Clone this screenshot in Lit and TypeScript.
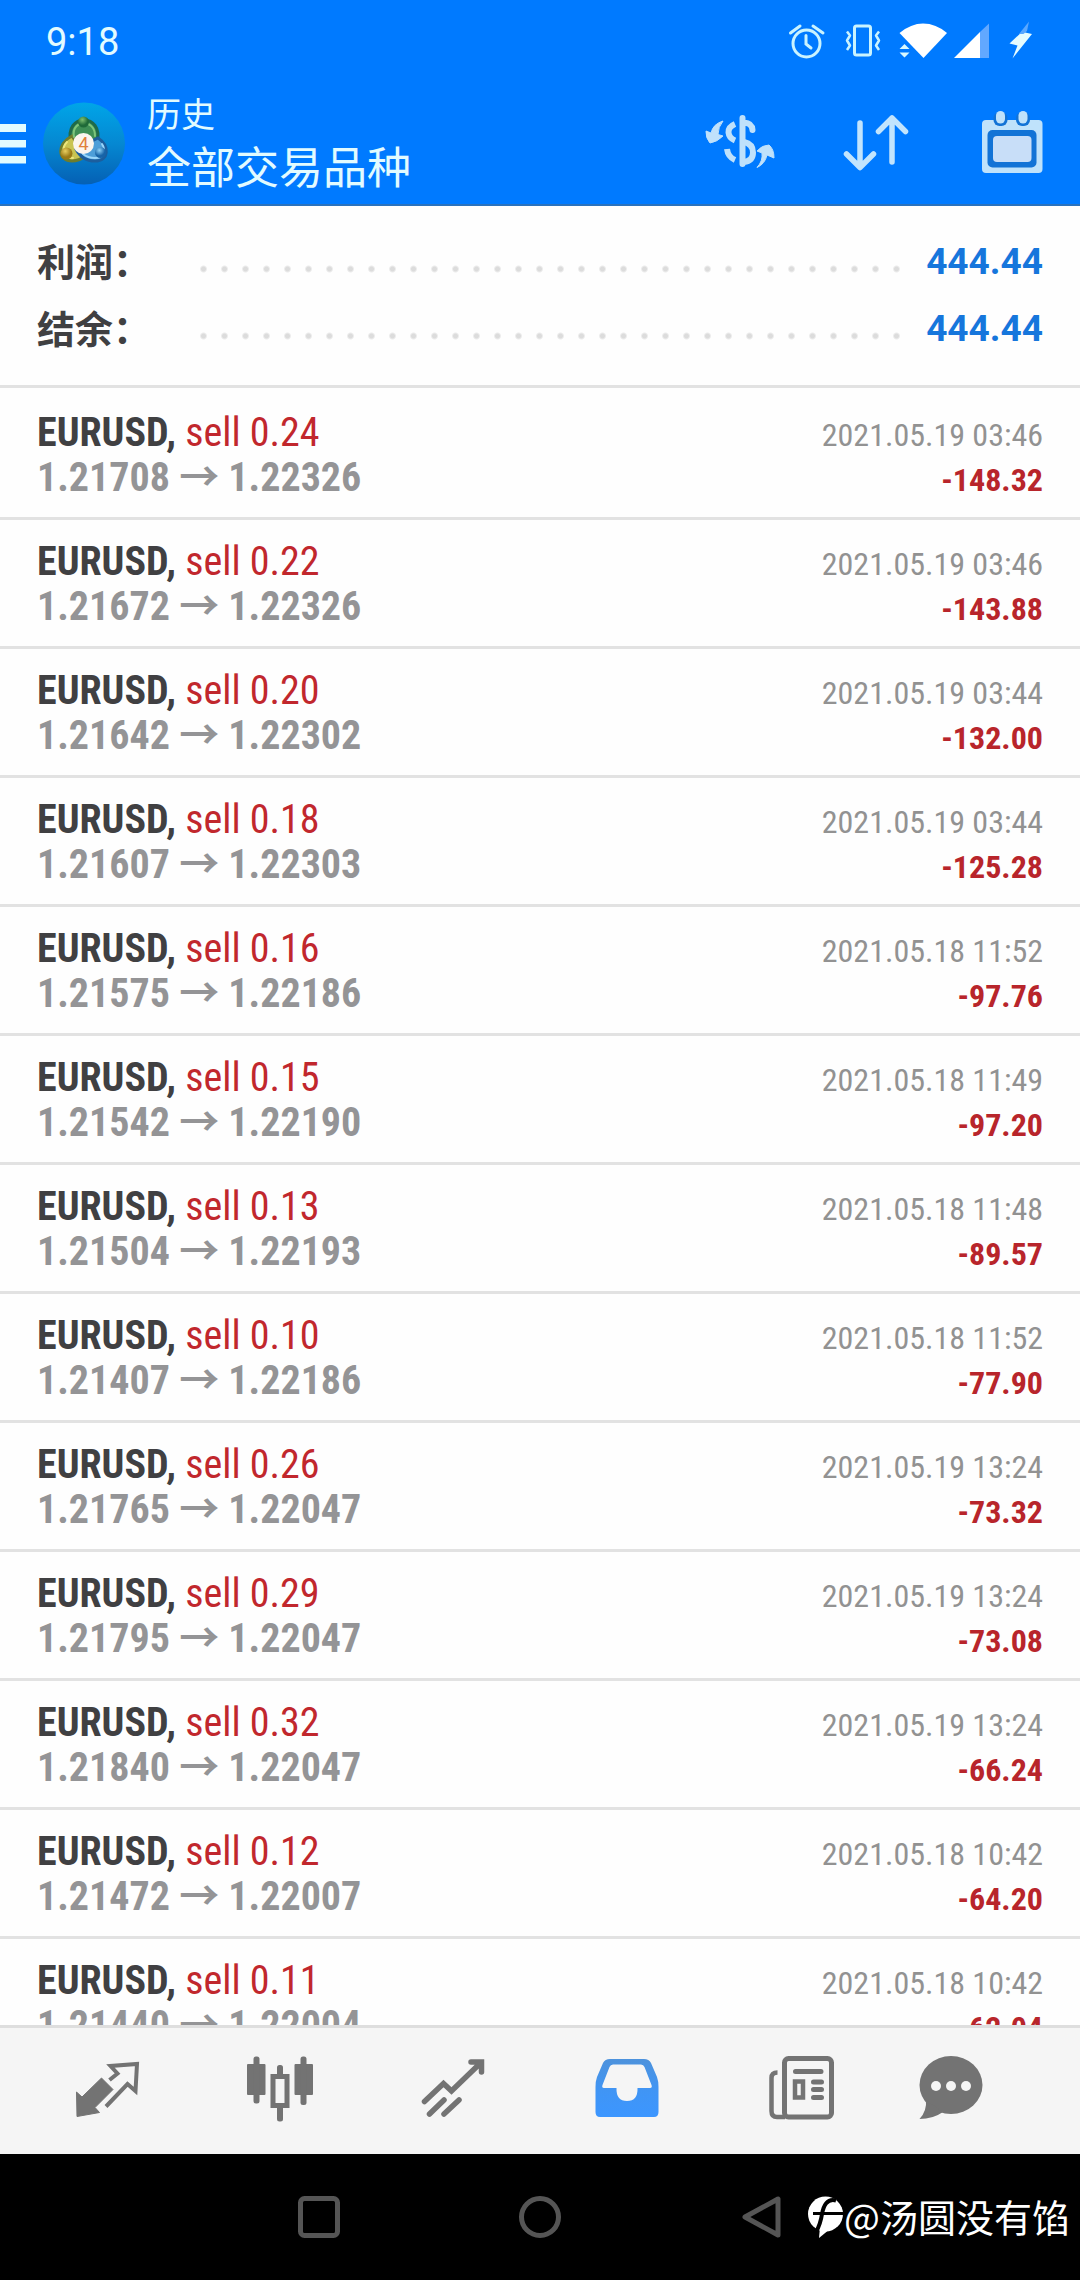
import { LitElement, html, svg, css, TemplateResult, SVGTemplateResult } from "lit";
import { customElement } from "lit/decorators.js";

interface Deal {
  volume: string;
  open: string;
  close: string;
  time: string;
  profit: string;
}

const DEALS: Deal[] = [
  { volume: "0.24", open: "1.21708", close: "1.22326", time: "2021.05.19 03:46", profit: "-148.32" },
  { volume: "0.22", open: "1.21672", close: "1.22326", time: "2021.05.19 03:46", profit: "-143.88" },
  { volume: "0.20", open: "1.21642", close: "1.22302", time: "2021.05.19 03:44", profit: "-132.00" },
  { volume: "0.18", open: "1.21607", close: "1.22303", time: "2021.05.19 03:44", profit: "-125.28" },
  { volume: "0.16", open: "1.21575", close: "1.22186", time: "2021.05.18 11:52", profit: "-97.76" },
  { volume: "0.15", open: "1.21542", close: "1.22190", time: "2021.05.18 11:49", profit: "-97.20" },
  { volume: "0.13", open: "1.21504", close: "1.22193", time: "2021.05.18 11:48", profit: "-89.57" },
  { volume: "0.10", open: "1.21407", close: "1.22186", time: "2021.05.18 11:52", profit: "-77.90" },
  { volume: "0.26", open: "1.21765", close: "1.22047", time: "2021.05.19 13:24", profit: "-73.32" },
  { volume: "0.29", open: "1.21795", close: "1.22047", time: "2021.05.19 13:24", profit: "-73.08" },
  { volume: "0.32", open: "1.21840", close: "1.22047", time: "2021.05.19 13:24", profit: "-66.24" },
  { volume: "0.12", open: "1.21472", close: "1.22007", time: "2021.05.18 10:42", profit: "-64.20" },
  { volume: "0.11", open: "1.21440", close: "1.22004", time: "2021.05.18 10:42", profit: "-62.04" },
];

const icon = (x: number, y: number, w: number, h: number, body: SVGTemplateResult): TemplateResult =>
  html`<svg width=${w} height=${h} viewBox="${x} ${y} ${w} ${h}" aria-hidden="true">${body}</svg>`;

const STATUS_ICONS = [
  icon(780, 20, 54, 44, svg`<g fill="none" stroke="#c9f3ff" stroke-width="3" stroke-linecap="round">
    <circle cx="806.5" cy="43.5" r="13.5"/><path d="M806 35.500V44L811 48M790.500 33L800 26M813 26L823 33"/></g>`),
  icon(838, 20, 51, 44, svg`<g fill="none" stroke="#c9f3ff" stroke-width="3" stroke-linejoin="round">
    <rect x="854.500" y="26" width="16" height="29" rx="2"/>
    <path stroke-width="2.500" d="M847 31.500L850 35.500L847 40.500L850 45.500L847 50M879 31.500L876 35.500L879 40.500L876 45.500L879 50"/></g>`),
  icon(893, 20, 55, 44, svg`<path fill="#fff" d="M899.500 33Q911 23.500 923 23.500Q936 23.500 947 33L923.500 58Z"/>
    <path d="M898 50L904.500 42L911 50V53L904.500 60L898 53Z" fill="#0079ff"/>
    <path fill="#d8f8ff" d="M899.500 49L904.500 44L909.500 49ZM899.500 52.500H909.500L904.500 57.500Z"/>`),
  icon(952, 20, 43, 44, svg`<path fill="#fff" d="M954 58L980 32V58Z"/><path fill="#62a8ff" d="M980 32L989 23.500V58H980Z"/>`),
  icon(999, 20, 41, 44, svg`<path fill="#e6fcff" d="M1024 30L1009.500 43.500L1017.500 45.500L1012.500 58.500L1032 34L1025 32.500L1027 28Z"/>
    <path fill="#5aa8ff" d="M1029 21.500L1019 34L1023.500 34L1027 31Z"/>`),
];

const BRAND = icon(42, 101, 84, 86, svg`
  <defs>
    <linearGradient id="disc" x1="0" y1="0" x2="0" y2="1"><stop offset="0" stop-color="#00a5e8"/><stop offset=".5" stop-color="#0588d2"/><stop offset="1" stop-color="#0560b4"/></linearGradient>
    <radialGradient id="gr" cx=".4" cy=".3"><stop offset="0" stop-color="#7fc070"/><stop offset="1" stop-color="#1f6a38"/></radialGradient>
    <radialGradient id="ye" cx=".4" cy=".3"><stop offset="0" stop-color="#e8cf60"/><stop offset="1" stop-color="#9a7a16"/></radialGradient>
    <radialGradient id="bl" cx=".4" cy=".3"><stop offset="0" stop-color="#8ed2f8"/><stop offset="1" stop-color="#1764a8"/></radialGradient>
  </defs>
  <circle cx="84" cy="143.500" r="41" fill="url(#disc)"/>
  <g stroke-linecap="round">
    <path d="M71 143C67 127 76 120 84 120S101 127 97 143Z" fill="#3f8f55" stroke="#1f6a4a" stroke-width="3"/>
    <path d="M72 136C56 144 58 161 72 161Q79 161 85 156Z" fill="#c9c452" stroke="#6e7d2c" stroke-width="3"/>
    <path d="M98 138C110 146 109 161 95 161Q82 161 76 149Z" fill="#4d9ed8" stroke="#1c5e9e" stroke-width="3"/>
    <path d="M74 137C72 127 79 123 84 123S95 127 95 136" fill="none" stroke="#7fc57c" stroke-width="2"/>
    <path d="M67 142C61 148 63 158 73 158" fill="none" stroke="#ece77e" stroke-width="2"/>
    <path d="M102 144C106 150 104 158 95 158Q88 158 83 154" fill="none" stroke="#9ad6fa" stroke-width="2"/>
  </g>
  <circle cx="83.500" cy="122" r="5.500" fill="url(#gr)"/>
  <circle cx="66.500" cy="153.500" r="6" fill="url(#ye)"/>
  <circle cx="100.500" cy="152.500" r="5.500" fill="url(#bl)"/>
  <circle cx="83.500" cy="143.500" r="10.500" fill="#fbf5ee"/>
  <text x="83.500" y="150" text-anchor="middle" font-family="Roboto, sans-serif" font-size="18" fill="#e0803a">4</text>`);

const MENU = icon(0, 121, 30, 48, svg`<path fill="#e2fbff" d="M0 125H26V133H0ZM0 141H26V148.500H0ZM0 157H26V164.500H0Z"/>`);

const ACTIONS = [
  { label: "交易品种", art: icon(700, 104, 80, 80, svg`
    <g fill="none" stroke="#bfe1fb" stroke-width="6">
      <path stroke-linecap="round" d="M742.500 118V164M744 122.500Q752 123 752.500 130"/>
      <path d="M735 124Q728 127 728.500 132.500T735 140.500M727 149Q728 157 735 160M744 142Q753 144 753 152.500T744 162"/>
    </g>
    <path fill="#bfe1fb" stroke="#bfe1fb" stroke-width="1" stroke-linejoin="round" d="M723 121Q713 124 711 133L706 131Q705.500 138 710 143Q717 142 723 136L718 134.500Q718 127 723 121ZM757 167.500Q765 164 767 155L774 158Q774 149 769 145Q762 145 757 151L762 153Q763 161 757 167.500Z"/>`) },
  { label: "排序", art: icon(836, 104, 80, 80, svg`<g fill="none" stroke="#c2e4fd" stroke-width="5.500" stroke-linecap="round" stroke-linejoin="round">
    <path d="M860 123V167M846.500 154L860 167.500L873.500 154M892 162V118M878.500 131.500L892 118L905.500 131.500"/></g>`) },
  { label: "日期", art: icon(972, 104, 80, 80, svg`<rect x="982" y="120" width="60.500" height="53" rx="4" fill="#bfe2fb"/>
    <rect x="987.500" y="130" width="49" height="37.500" rx="5" fill="#1273d6"/>
    <rect x="993" y="136" width="38.500" height="26" rx="4" fill="#c8def8"/>
    <g fill="#1273d6"><rect x="993.500" y="112" width="14" height="14" rx="6"/><rect x="1016" y="112" width="14" height="14" rx="6"/></g>
    <g fill="#bfe2fb"><rect x="996" y="111" width="9" height="12.500" rx="4.500"/><rect x="1018.500" y="111" width="9" height="12.500" rx="4.500"/></g>`) },
];

const G = "#737373";
const TABS = [
  { label: "行情", art: icon(68, 2053, 80, 76, svg`
    <path fill=${G} stroke=${G} stroke-width="1" stroke-linejoin="round" d="M76.500 2092L82 2097L101.500 2078L113 2089.500L95 2107.500L99.500 2112.500L77 2116.500Z"/>
    <path fill="none" stroke=${G} stroke-width="4" d="M109.500 2080L117.500 2073.500L110.500 2066L137 2064L135.500 2091L127.500 2084L106 2106.500"/>`) },
  { label: "图表", art: icon(242, 2053, 80, 76, svg`<g fill=${G}>
    <rect x="247" y="2064" width="18.500" height="31" rx="1"/><rect x="253.500" y="2056.500" width="6" height="47" rx="2.500"/>
    <rect x="294.500" y="2064" width="18.500" height="31" rx="1"/><rect x="300.500" y="2056.500" width="6" height="48.500" rx="2.500"/>
    <rect x="277" y="2065" width="6" height="12" rx="2.500"/><rect x="277" y="2105" width="6" height="16.500" rx="2.500"/></g>
    <rect x="273" y="2076.500" width="14" height="29" fill="none" stroke=${G} stroke-width="5"/>`) },
  { label: "交易", art: icon(416, 2053, 80, 76, svg`<g fill="none" stroke=${G} stroke-width="5.500" stroke-linecap="round">
    <path d="M424.500 2101.500L443.500 2083.500L451.500 2091L480 2063.500M471 2062H481.500V2072M429.500 2114L444 2100M444 2114L459 2100"/></g>`) },
  { label: "历史", active: true, art: icon(590, 2053, 80, 76, svg`
    <defs><linearGradient id="tray" x1="0" y1="0" x2="0" y2="1"><stop offset="0" stop-color="#4d92dc"/><stop offset=".55" stop-color="#4095f5"/><stop offset="1" stop-color="#3c96ff"/></linearGradient></defs>
    <path fill="url(#tray)" fill-rule="evenodd" d="M610 2059H644Q649 2059 651 2063L657 2077Q658.500 2081 658.500 2087V2112Q658.500 2117 654 2117H600Q595.500 2117 595.500 2112V2087Q595.500 2081 597 2077L603 2063Q605 2059 610 2059ZM613 2064.500Q610.500 2064.500 609.500 2067L602.500 2085Q601.500 2088 604 2088H616.500Q616 2101 627 2101T637.500 2088H650Q652.500 2088 651.500 2085L644.500 2067Q643.500 2064.500 641 2064.500Z"/>`) },
  { label: "新闻", art: icon(764, 2053, 80, 76, svg`<g fill="none" stroke=${G} stroke-width="5" stroke-linecap="round">
    <rect x="784.500" y="2058.500" width="47" height="58.500" rx="4"/>
    <path stroke-linecap="butt" stroke-width="4.500" d="M777.500 2072.500Q771.500 2072.500 771.500 2078V2111Q771.500 2117 777 2117H785"/>
    <path d="M795.500 2071.500H821M813.500 2082H821.500M813.500 2089.500H821.500M813.500 2097.500H821.500"/>
    <rect x="795" y="2081.500" width="8" height="16" stroke-width="4.500"/></g>`) },
  { label: "消息", art: icon(911, 2053, 80, 76, svg`<ellipse cx="951" cy="2085" rx="31.500" ry="29" fill=${G}/>
    <path fill=${G} d="M926 2100Q927 2111 919.500 2119Q933 2119 943 2112Z"/>
    <g fill="#f5f5f5"><circle cx="936" cy="2086" r="5"/><circle cx="951" cy="2086" r="5"/><circle cx="966" cy="2086" r="5"/></g>`) },
];

const KEYS = [
  { label: "最近任务", art: icon(297, 2195, 44, 44, svg`<rect x="300.500" y="2198.500" width="37" height="37" rx="4" fill="none" stroke="#555" stroke-width="5"/>`) },
  { label: "主页", art: icon(518, 2195, 44, 44, svg`<circle cx="540" cy="2217" r="18.500" fill="none" stroke="#555" stroke-width="5"/>`) },
  { label: "返回", art: icon(740, 2195, 44, 44, svg`<path d="M779 2199V2235L746 2217Z" fill="none" stroke="#555" stroke-width="5" stroke-linejoin="round"/>`) },
];

const MARK = icon(804, 2198, 38, 46, svg`<circle cx="823.500" cy="2219" r="17.500" fill="#fff"/>
  <path fill="#fff" d="M818 2232L817 2243L828 2234Z"/>
  <path fill="none" stroke="#000" stroke-width="4" d="M834 2205.500C825 2203 821.500 2211 820 2219Q818.500 2229 814 2237"/>
  <path stroke="#000" stroke-width="3" d="M811 2218.500H842"/>`);

@customElement("app-root")
export class AppRoot extends LitElement {
  static styles = css`
    :host {
      display: flex;
      flex-direction: column;
      height: 100vh;
      overflow: hidden;
      background: #fefefe;
      font-family: Roboto, "Noto Sans CJK SC", sans-serif;
    }
    svg { display: block; flex: none; }
    button { border: 0; padding: 0; margin: 0; background: none; display: grid; place-items: center; }
    h1, p, ul, dl, dd { margin: 0; padding: 0; }
    .head { background: #007aff; color: #e2fbff; border-bottom: 2px solid #2a72bd; }
    .status {
      display: flex; align-items: center; gap: 4px;
      height: 84px; padding: 0 40px 0 46px; box-sizing: border-box;
    }
    .clock { font-size: 38px; line-height: 44px; margin-right: auto; }
    .bar { display: flex; align-items: center; height: 120px; padding: 0 28px 0 0; box-sizing: border-box; }
    .brand { margin-left: 12px; }
    .titles { flex: 1; padding: 0 0 6px 21px; font-family: "Noto Sans CJK SC", sans-serif; }
    .section { font-size: 34px; line-height: 48px; }
    .filter { font-size: 44px; line-height: 56px; font-weight: 400; }
    .actions { display: flex; gap: 56px; }
    .totals { padding: 22px 37px 23px; border-bottom: 3px solid #e2e2e2; }
    .total { display: flex; align-items: center; height: 67px; }
    .total dt { padding-bottom: 4px; font: 700 38px/56px "Noto Sans CJK SC", sans-serif; color: #404042; }
    .dots {
      flex: 1; height: 22px; margin: 0 19px 0 42px;
      background: radial-gradient(circle, #dcdcdc 2px, transparent 4px) 0 100% / 21px 8px;
      background-repeat: round no-repeat;
    }
    .total dd { font-size: 37px; line-height: 44px; font-weight: 700; color: #1676dc; }
    .deals { flex: 1; min-height: 0; overflow: hidden; list-style: none; padding-top: 3px; }
    .deal {
      padding: 19px 37px 17px; border-bottom: 3px solid #e2e2e2;
      font-family: "Roboto Condensed", Roboto, sans-serif; font-size: 40px; line-height: 45px;
    }
    .line { display: flex; justify-content: space-between; align-items: baseline; white-space: pre; }
    .symbol { font-weight: 700; color: #404042; }
    .side { color: #c1272d; }
    .price { font-weight: 700; color: #949496; }
    .arrow { font-family: "Noto Sans CJK SC", sans-serif; line-height: 36px; }
    .time { font-size: 32px; line-height: 36px; color: #929292; }
    .profit { font-size: 32px; line-height: 36px; font-weight: 700; color: #b8252b; }
    .tabs {
      display: flex; height: 126px; padding: 0 69px 0 21px;
      background: #f5f5f5; border-top: 3px solid #dedede;
    }
    .tab { flex: 174 1 0; }
    .tab:last-child { flex-grow: 120; }
    .keys {
      position: relative; display: flex; justify-content: center; align-items: center; gap: 177px;
      height: 126px; background: #000;
    }
    .mark {
      position: absolute; right: 10px; top: 37px; display: flex; align-items: center;
      color: #fff; font: 400 38px/50px "Noto Sans CJK SC", sans-serif;
    }
  `;

  private total(label: string, value: string) {
    return html`<div class="total"><dt>${label}</dt><span class="dots"></span><dd>${value}</dd></div>`;
  }

  private deal(d: Deal) {
    return html`<li class="deal">
      <div class="line"><span><span class="symbol">EURUSD,</span> <span class="side">sell ${d.volume}</span></span><span class="time">${d.time}</span></div>
      <div class="line"><span class="price">${d.open} <span class="arrow">→</span> ${d.close}</span><span class="profit">${d.profit}</span></div>
    </li>`;
  }

  render() {
    return html`
      <header class="head">
        <div class="status"><span class="clock">9:18</span>${STATUS_ICONS}</div>
        <div class="bar">
          <button aria-label="菜单">${MENU}</button>
          <span class="brand">${BRAND}</span>
          <div class="titles"><p class="section">历史</p><h1 class="filter">全部交易品种</h1></div>
          <div class="actions">${ACTIONS.map(a => html`<button aria-label=${a.label}>${a.art}</button>`)}</div>
        </div>
      </header>
      <dl class="totals">${this.total("利润：", "444.44")}${this.total("结余：", "444.44")}</dl>
      <ul class="deals">${DEALS.map(d => this.deal(d))}</ul>
      <nav class="tabs">${TABS.map(t => html`<button class="tab" aria-label=${t.label} aria-current=${t.active ? "page" : "false"}>${t.art}</button>`)}</nav>
      <footer class="keys">
        ${KEYS.map(k => html`<button aria-label=${k.label}>${k.art}</button>`)}
        <div class="mark">${MARK}<span>@汤圆没有馅</span></div>
      </footer>`;
  }
}
